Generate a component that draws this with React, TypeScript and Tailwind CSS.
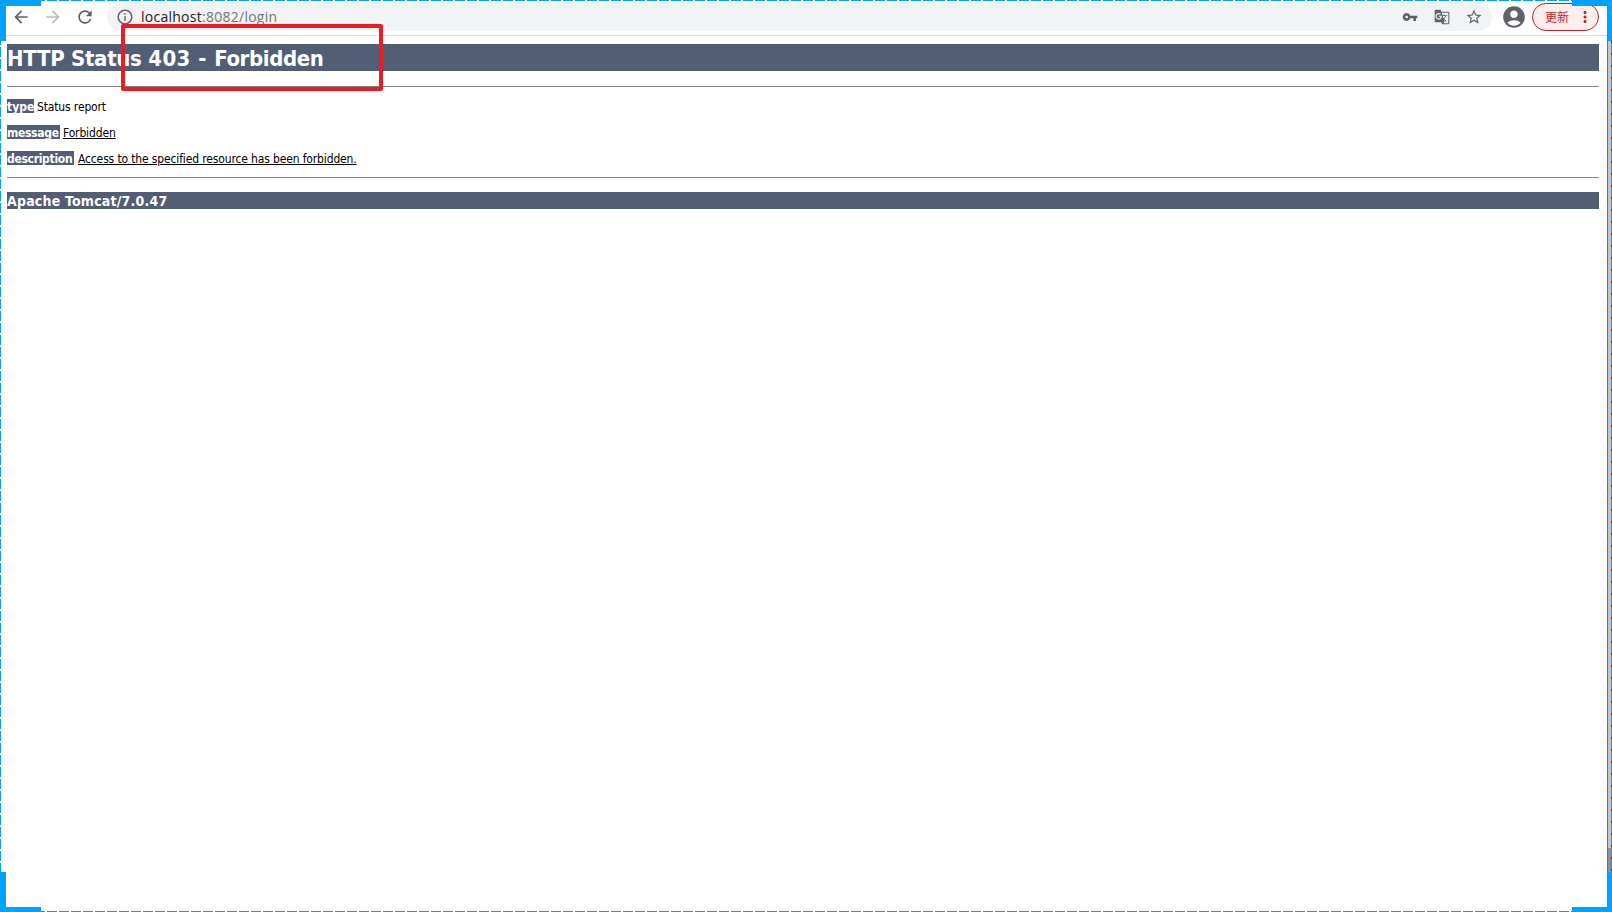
import { MdArrowBack, MdArrowForward, MdRefresh, MdInfoOutline, MdVpnKey, MdGTranslate, MdStarBorder, MdAccountCircle, MdMoreVert } from 'react-icons/md';

interface ReportLineProps {
    label: string;
    labelClass: string;
    textClass?: string;
    children: string;
}

const ReportLine = ({ label, labelClass, textClass = '', children }: ReportLineProps) => (
    <div className="flex h-[14px] items-start mb-3 whitespace-nowrap text-[12px] leading-4">
        <b className={`h-[14px] bg-[#525D76] text-white ${labelClass}`}>{label}</b>
        <span className={`h-[14px] tracking-[-0.14px] text-black ${textClass}`}>{children}</span>
    </div>
);

const Toolbar = () => (
    <div className="flex h-9 shrink-0 items-start border-b border-[#dadce0] bg-white text-[#5f6368]">
        <div className="mt-[7px] flex w-[107px] shrink-0 pl-[11px]">
            <MdArrowBack size={20} className="mr-3" />
            <MdArrowForward size={20} className="mr-3 text-[#babcbe]" />
            <MdRefresh size={20} />
        </div>
        <div className="mt-[3px] flex h-7 w-[1385px] shrink-0 items-center rounded-full bg-[#f1f3f4] pl-[9px] pr-[9px]">
            <MdInfoOutline size={18} />
            <span className="ml-[7px] whitespace-nowrap font-['Open_Sans',sans-serif] text-[14px] leading-5 tracking-[0.26px] text-[#70757a]">
                <span className="text-[#202124]">localhost</span>:8082/login
            </span>
            <div className="ml-auto flex items-center">
                <MdVpnKey size={16} className="mr-4" />
                <MdGTranslate size={16} className="mr-[15px]" />
                <MdStarBorder size={18} />
            </div>
        </div>
        <MdAccountCircle size={26} className="ml-[9px] mt-1 shrink-0" />
        <div className="ml-[5px] mt-[3px] flex h-7 w-[67px] shrink-0 items-center rounded-full border border-[#c5221f] bg-[#fceeed] text-[#c5221f]">
            <span className="ml-3 font-['Noto_Sans_CJK_SC',sans-serif] text-xs">更新</span>
            <MdMoreVert size={18} className="ml-[7px]" />
        </div>
    </div>
);

// Screen-capture selection: dashed outline with solid corner handles
const CaptureFrame = () => (
    <svg width="1612" height="912" className="pointer-events-none absolute inset-0" shapeRendering="crispEdges">
        <rect x="1607" y="41" width="1" height="831" fill="#707070" />
        <rect x="1608" y="41" width="3" height="807" fill="#c4c4c4" />
        <rect x="1608" y="848" width="3" height="24" fill="#8f8f8f" />
        <rect x="1611" y="41" width="1" height="831" fill="#333333" />
        <g stroke="#00a2ff" strokeWidth="1" strokeDasharray="10 2">
            <path d="M41 .5H1572" strokeDashoffset="6" />
            <path d="M41 911.5H1572" strokeDashoffset="6" />
            <path d="M.5 41V872" strokeDashoffset="6" />
            <path d="M1611.5 41V872" strokeDashoffset="10" />
        </g>
        <g fill="#00a2ff">
            <path d="M0 0H41V6H6V41H0Z" />
            <path d="M1572 0H1612V41H1607V6H1572Z" />
            <path d="M0 872H6V907H41V912H0Z" />
            <path d="M1607 872H1612V912H1572V907H1607Z" />
        </g>
    </svg>
);

export default function App() {
    return (
        <div className="relative flex h-[912px] w-[1612px] flex-col overflow-hidden bg-white font-['DejaVu_Sans_Condensed','DejaVu_Sans',sans-serif]">
            <Toolbar />
            <main className="ml-[7px] mt-2 w-[1592px]">
                <h1 className="h-[27px] whitespace-nowrap bg-[#525D76] text-[22px] font-bold leading-[29px] tracking-[-0.3px] text-white">
                    HTTP Status <span className="tracking-[0.45px]">403 - </span>
                    <span className="tracking-[-0.4px]">Forbidden</span>
                </h1>
                <hr className="mb-3 mt-[15px] border-[#808080]" />
                <ReportLine label="type" labelClass="mr-[3px] w-[27px]">Status report</ReportLine>
                <ReportLine label="message" labelClass="mr-[3px] w-[53px] tracking-[-0.3px]" textClass="underline underline-offset-1">Forbidden</ReportLine>
                <ReportLine label="description" labelClass="mr-1 w-[67px] tracking-[-0.3px]" textClass="underline underline-offset-1">
                    Access to the specified resource has been forbidden.
                </ReportLine>
                <hr className="mb-[14px] border-[#808080]" />
                <h3 className="h-[17px] bg-[#525D76] text-[14px] font-bold leading-[19px] tracking-[0.2px] text-white">
                    Apache Tomcat/7.0.47
                </h3>
            </main>
            <CaptureFrame />
            {/* Marker drawn around the status code */}
            <div className="absolute left-[121px] top-6 h-[67px] w-[262px] rounded-[2px] border-4 border-[#ed1c24]" />
        </div>
    );
}
